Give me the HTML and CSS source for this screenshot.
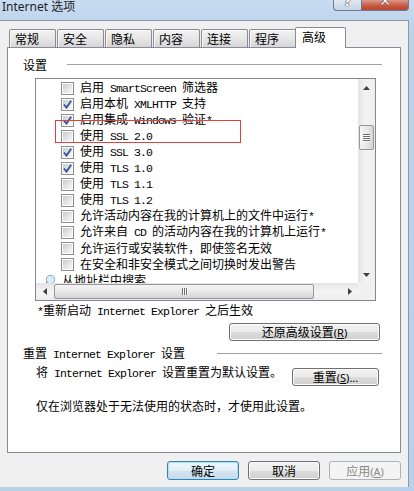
FILE: index.html
```html
<!DOCTYPE html>
<html>
<head>
<meta charset="utf-8">
<link rel="stylesheet" href="styles.css">
</head>
<body>
<div class="window">
    <div class="titlebar">
        <span class="title">Internet 选项</span>
        <div class="caption">
            <span class="cap-btn cap-help"><span>?</span></span>
            <span class="cap-btn cap-close"><span>✕</span></span>
        </div>
    </div>

    <div class="dialog">
        <div class="tabs">
            <span class="tab">常规</span>
            <span class="tab">安全</span>
            <span class="tab">隐私</span>
            <span class="tab">内容</span>
            <span class="tab">连接</span>
            <span class="tab">程序</span>
            <span class="tab tab-on">高级</span>
        </div>

        <div class="panel">
            <div class="group-head"><span>设置</span><i class="rule"></i></div>

            <div class="listbox">
                <div class="list-view">
                    <div class="row"><span class="cb"></span><span class="txt">启用<span class="en"> SmartScreen </span>筛选器</span></div>
                    <div class="row"><span class="cb on"><svg viewBox="0 0 11 11"><path d="M2 5.5 L4.5 8.5 L9.2 1.8"/></svg></span><span class="txt">启用本机<span class="en"> XMLHTTP </span>支持</span></div>
                    <div class="row"><span class="cb on"><svg viewBox="0 0 11 11"><path d="M2 5.5 L4.5 8.5 L9.2 1.8"/></svg></span><span class="txt">启用集成<span class="en"> Windows </span>验证<span class="en">*</span></span></div>
                    <div class="row"><span class="cb"></span><span class="txt">使用<span class="en"> SSL 2.0</span></span></div>
                    <div class="row"><span class="cb on"><svg viewBox="0 0 11 11"><path d="M2 5.5 L4.5 8.5 L9.2 1.8"/></svg></span><span class="txt">使用<span class="en"> SSL 3.0</span></span></div>
                    <div class="row"><span class="cb on"><svg viewBox="0 0 11 11"><path d="M2 5.5 L4.5 8.5 L9.2 1.8"/></svg></span><span class="txt">使用<span class="en"> TLS 1.0</span></span></div>
                    <div class="row"><span class="cb"></span><span class="txt">使用<span class="en"> TLS 1.1</span></span></div>
                    <div class="row"><span class="cb"></span><span class="txt">使用<span class="en"> TLS 1.2</span></span></div>
                    <div class="row"><span class="cb"></span><span class="txt">允许活动内容在我的计算机上的文件中运行<span class="en">*</span></span></div>
                    <div class="row"><span class="cb"></span><span class="txt">允许来自<span class="en"> CD </span>的活动内容在我的计算机上运行<span class="en">*</span></span></div>
                    <div class="row"><span class="cb"></span><span class="txt">允许运行或安装软件，即使签名无效</span></div>
                    <div class="row"><span class="cb"></span><span class="txt">在安全和非安全模式之间切换时发出警告</span></div>
                    <div class="row row-top">
                        <svg class="search-ico" viewBox="0 0 13 13">
                            <line x1="4.5" y1="8.5" x2="1.5" y2="12" stroke="#8c8c8c" stroke-width="2"/>
                            <circle cx="7.5" cy="5.5" r="4.2" fill="#dcedfa" stroke="#7ea6cf"/>
                        </svg>
                        <span class="txt">从地址栏中搜索</span>
                    </div>
                    <div class="mark"></div>
                </div>

                <div class="vscroll">
                    <span class="sb-arrow"><svg width="7" height="4" viewBox="0 0 7 4"><path d="M0 4 L3.5 0 L7 4Z"/></svg></span>
                    <div class="sb-track">
                        <div class="thumb-v"><i></i><i></i><i></i><i></i></div>
                    </div>
                    <span class="sb-arrow"><svg width="7" height="4" viewBox="0 0 7 4"><path d="M0 0 L7 0 L3.5 4Z"/></svg></span>
                </div>

                <div class="hscroll">
                    <span class="sb-arrow"><svg width="4" height="7" viewBox="0 0 4 7"><path d="M4 0 L4 7 L0 3.5Z"/></svg></span>
                    <div class="sb-track">
                        <div class="thumb-h"><i></i><i></i><i></i></div>
                    </div>
                    <span class="sb-arrow"><svg width="4" height="7" viewBox="0 0 4 7"><path d="M0 0 L4 3.5 L0 7Z"/></svg></span>
                </div>
                <div class="corner"></div>
            </div>

            <div class="note"><span class="en">*</span>重新启动<span class="en"> Internet Explorer </span>之后生效</div>
            <div class="restore-row">
                <span class="btn btn-restore">还原高级设置<span class="key">(<u>R</u>)</span></span>
            </div>

            <div class="group-head group-reset"><span>重置<span class="en"> Internet Explorer </span>设置</span><i class="rule"></i></div>
            <div class="reset-row">
                <span class="indent">将<span class="en"> Internet Explorer </span>设置重置为默认设置。</span>
                <span class="btn btn-reset">重置<span class="key">(<u>S</u>)...</span></span>
            </div>
            <div class="indent hint">仅在浏览器处于无法使用的状态时，才使用此设置。</div>
        </div>

        <div class="actions">
            <span class="btn btn-default">确定</span>
            <span class="btn">取消</span>
            <span class="btn btn-off">应用<span class="key">(<u>A</u>)</span></span>
        </div>
    </div>
</div>
</body>
</html>
```

FILE: styles.css
```css
body {
    margin: 0;
    width: 414px;
    height: 491px;
    overflow: hidden;
    background: #b9d1ea;
    font-family: "Noto Sans CJK SC", "Noto Sans", sans-serif;
    font-size: 12px;
    line-height: 16px;
    color: #000;
}
.window {
    display: flex;
    flex-direction: column;
    height: 491px;
    background: linear-gradient(180deg, #c8dcf1 0, #bcd3ec 30px, #b9d1ea 100%);
}

/* title bar */
.titlebar {
    height: 20px;
    display: flex;
    justify-content: space-between;
    align-items: flex-start;
    padding: 0 5px 0 2px;
}
.title {
    font-family: "Noto Sans", "Noto Sans CJK SC", sans-serif;
    font-size: 12px;
    line-height: 14px;
    color: #1e1e1e;
}
.caption {
    display: flex;
}
.cap-btn {
    height: 11px;
    box-sizing: border-box;
    border: 1px solid #6b7a8e;
    border-top: 0;
    overflow: hidden;
    text-align: center;
    color: #fff;
    font: bold 14px/16px "DejaVu Sans", sans-serif;
}
.cap-btn span {
    display: block;
    margin-top: -7px;
    text-shadow: 0 0 1px #2a2a2a, 0 0 1px #2a2a2a;
}
.cap-help {
    width: 29px;
    border-radius: 0 0 0 4px;
    background: linear-gradient(#e2eaf4, #c5d3e5);
}
.cap-close {
    width: 48px;
    margin-left: -1px;
    border-radius: 0 0 4px 0;
    background: linear-gradient(#dc9a8a, #c75540 60%, #bb4631);
}

/* dialog body */
.dialog {
    width: 409px;
    height: 467px;
    box-sizing: border-box;
    background: #f0f0f0;
    border-top: 1px solid #8d97a5;
    border-right: 1px solid #8d97a5;
    padding: 6px 7px 0;
    display: flex;
    flex-direction: column;
}
.tabs {
    display: flex;
    align-items: flex-end;
    height: 21px;
    padding-left: 2px;
    margin-bottom: -1px;
}
.tab {
    width: 47px;
    height: 18px;
    margin: 0 1px 1px 0;
    box-sizing: border-box;
    border: 1px solid #898c95;
    border-bottom: 0;
    border-radius: 2px 2px 0 0;
    background: linear-gradient(#f3f3f3, #e6e6e6 50%, #d6d6d6);
    box-shadow: inset 1px 1px 0 #fbfbfb;
    padding: 1px 0 0 5px;
    line-height: 16px;
}
.tab-on {
    position: relative;
    z-index: 1;
    width: 51px;
    height: 21px;
    margin: 0 0 0 -2px;
    background: #fff;
    box-shadow: none;
    padding: 1px 0 0 6px;
}
.panel {
    height: 406px;
    box-sizing: border-box;
    border: 1px solid #898c95;
    background: #fff;
    padding: 9px 18px 0 15px;
}

.group-head {
    display: flex;
    align-items: center;
    height: 16px;
}
.rule {
    flex: 1;
    height: 0;
    border-top: 1px solid #a0a0a0;
    margin: 0 0 1px 20px;
}
.group-reset {
    margin-top: 5px;
}
.group-reset .rule {
    margin-left: 32px;
}

/* list with scrollbars */
.listbox {
    display: grid;
    grid-template-columns: 1fr 17px;
    grid-template-rows: 1fr 17px;
    width: 341px;
    height: 223px;
    box-sizing: border-box;
    margin: 5px 0 0 12px;
    border: 1px solid #828790;
}
.list-view {
    position: relative;
    overflow: hidden;
    padding-top: 1px;
}
.row {
    display: flex;
    align-items: center;
    gap: 6px;
    height: 16px;
    padding-left: 25px;
    white-space: nowrap;
}
.row-top {
    padding-left: 7px;
}
.search-ico {
    width: 13px;
    height: 13px;
    flex: none;
}
.cb {
    flex: none;
    width: 13px;
    height: 13px;
    box-sizing: border-box;
    border: 1px solid #8e8f8f;
    padding: 1px;
    background: linear-gradient(135deg, #c9cdd2, #f8f8f8) content-box, #fdfdfd;
}
.cb svg {
    display: block;
    width: 11px;
    height: 11px;
    margin: -1px;
    fill: none;
    stroke: #34519c;
    stroke-width: 1.8;
}
.en {
    font-family: "Liberation Mono", monospace;
    font-size: 11.5px;
    letter-spacing: -0.9px;
}
.key {
    font-family: "Noto Sans", sans-serif;
    font-size: 11px;
}
.mark {
    position: absolute;
    left: 19px;
    top: 41px;
    width: 186px;
    height: 23px;
    box-sizing: border-box;
    border: 1px solid #e3413b;
}

.vscroll,
.hscroll {
    display: flex;
    background: linear-gradient(90deg, #e4e4e4, #f3f3f3 45%, #eeeeee);
}
.vscroll {
    flex-direction: column;
}
.hscroll {
    background: linear-gradient(#e4e4e4, #f3f3f3 45%, #eeeeee);
}
.sb-arrow {
    flex: none;
    width: 17px;
    height: 17px;
    display: flex;
    align-items: center;
    justify-content: center;
    fill: #404040;
}
.sb-track {
    flex: 1;
}
.thumb-v {
    margin: 29px 1px 0;
    height: 25px;
    box-sizing: border-box;
    border: 1px solid #979797;
    border-radius: 2px;
    background: linear-gradient(90deg, #f5f5f5, #e8e8e8 50%, #d5d5d5);
    display: flex;
    flex-direction: column;
    align-items: center;
    justify-content: center;
    gap: 1px;
}
.thumb-v i {
    width: 7px;
    height: 1px;
    background: #6e6e6e;
    box-shadow: 0 1px 0 #fdfdfd;
}
.thumb-h {
    margin: 1px 0 0 1px;
    width: 260px;
    height: 15px;
    box-sizing: border-box;
    border: 1px solid #979797;
    border-radius: 2px;
    background: linear-gradient(#f5f5f5, #e8e8e8 50%, #d5d5d5);
    display: flex;
    align-items: center;
    justify-content: center;
    gap: 1px;
}
.thumb-h i {
    width: 1px;
    height: 7px;
    background: #6e6e6e;
    box-shadow: 1px 0 0 #fdfdfd;
}
.corner {
    background: #f0f0f0;
}

/* texts and buttons below the list */
.note {
    margin: 1px 0 0 14px;
    white-space: nowrap;
}
.restore-row {
    display: flex;
    justify-content: flex-end;
    margin: 3px 2px 0 0;
}
.reset-row {
    display: flex;
    margin-top: 2px;
}
.indent {
    margin-left: 13px;
    white-space: nowrap;
}
.hint {
    margin-top: 12px;
}
.btn {
    display: block;
    height: 18px;
    box-sizing: border-box;
    border: 1px solid #707070;
    border-radius: 3px;
    background: linear-gradient(#f2f2f2, #ebebeb 50%, #dddddd 51%, #cfcfcf);
    box-shadow: inset 0 0 0 1px #fbfbfb;
    text-align: center;
    line-height: 16px;
    white-space: nowrap;
}
.btn-restore {
    width: 151px;
}
.btn-reset {
    width: 87px;
    margin: 4px 3px 0 auto;
}
.actions {
    display: flex;
    justify-content: flex-end;
    gap: 9px;
    margin-top: 8px;
}
.actions .btn {
    width: 72px;
    height: 19px;
    line-height: 17px;
}
.actions .btn-default {
    border-color: #3c7fb1;
    background: linear-gradient(#edf6fc, #e2eef7 50%, #d3e4f0 51%, #c8dceb);
    box-shadow: inset 0 0 0 1px #a9e3fa;
}
.actions .btn-off {
    border-color: #adb2b5;
    background: #f4f4f4;
    box-shadow: none;
    color: #8a8a8a;
}
```
